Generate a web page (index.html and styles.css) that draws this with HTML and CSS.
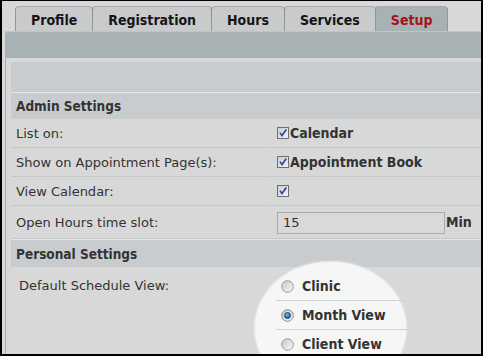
FILE: index.html
```html
<!DOCTYPE html>
<html>
<head>
<meta charset="utf-8">
<link rel="stylesheet" href="styles.css">
</head>
<body>
<svg class="defs" width="0" height="0">
  <defs>
    <linearGradient id="cbg" x1="0" y1="0" x2="1" y2="1">
      <stop offset="0" stop-color="#c9ccd6"/>
      <stop offset="1" stop-color="#f2f3f6"/>
    </linearGradient>
    <linearGradient id="rbg" x1="0" y1="0" x2="1" y2="1">
      <stop offset="0" stop-color="#c4c4c4"/>
      <stop offset="1" stop-color="#fbfbfb"/>
    </linearGradient>
    <radialGradient id="dot" cx="0.4" cy="0.35" r="0.7">
      <stop offset="0" stop-color="#6fc0f0"/>
      <stop offset="1" stop-color="#0d4f8c"/>
    </radialGradient>
  </defs>
</svg>
<div class="frame">
  <div class="tabs">
    <div class="tab">Profile</div>
    <div class="tab">Registration</div>
    <div class="tab">Hours</div>
    <div class="tab">Services</div>
    <div class="tab active">Setup</div>
  </div>
  <div class="panel">
    <div class="panel-bar"></div>
    <div class="panel-body">
      <div class="band"></div>
      <div class="section-head">Admin Settings</div>
      <div class="grid">
        <div class="cell label">List on:</div>
        <div class="cell value">
          <svg class="cb" width="12" height="12" viewBox="0 0 12 12"><rect x="0.5" y="0.5" width="11" height="11" fill="url(#cbg)" stroke="#6e6e6e"/><path d="M3 5.6 L5 8.6 L9.3 2.4" stroke="#34479a" stroke-width="1.7" fill="none"/></svg>
          <span class="strong">Calendar</span>
        </div>
        <div class="cell label">Show on Appointment Page(s):</div>
        <div class="cell value">
          <svg class="cb" width="12" height="12" viewBox="0 0 12 12"><rect x="0.5" y="0.5" width="11" height="11" fill="url(#cbg)" stroke="#6e6e6e"/><path d="M3 5.6 L5 8.6 L9.3 2.4" stroke="#34479a" stroke-width="1.7" fill="none"/></svg>
          <span class="strong">Appointment Book</span>
        </div>
        <div class="cell label">View Calendar:</div>
        <div class="cell value">
          <svg class="cb" width="12" height="12" viewBox="0 0 12 12"><rect x="0.5" y="0.5" width="11" height="11" fill="url(#cbg)" stroke="#6e6e6e"/><path d="M3 5.6 L5 8.6 L9.3 2.4" stroke="#34479a" stroke-width="1.7" fill="none"/></svg>
        </div>
        <div class="cell label tall">Open Hours time slot:</div>
        <div class="cell value tall">
          <input class="field" type="text" value="15">
          <span class="strong unit">Min</span>
        </div>
      </div>
      <div class="personal">
        <div class="section-head ph">Personal Settings</div>
        <div class="spot"></div>
        <div class="pgrid">
          <div class="plabel">Default Schedule View:</div>
          <ul class="radios">
            <li>
              <svg class="rd" width="13" height="13" viewBox="0 0 13 13"><circle cx="6.5" cy="6.5" r="5.8" fill="url(#rbg)" stroke="#9a9a9a"/></svg>
              <span class="strong">Clinic</span>
            </li>
            <li>
              <svg class="rd" width="13" height="13" viewBox="0 0 13 13"><circle cx="6.5" cy="6.5" r="5.8" fill="url(#rbg)" stroke="#8a8a8a"/><circle cx="6.5" cy="6.5" r="3" fill="url(#dot)" stroke="#0b3a66" stroke-width="0.8"/></svg>
              <span class="strong">Month View</span>
            </li>
            <li>
              <svg class="rd" width="13" height="13" viewBox="0 0 13 13"><circle cx="6.5" cy="6.5" r="5.8" fill="url(#rbg)" stroke="#9a9a9a"/></svg>
              <span class="strong">Client View</span>
            </li>
          </ul>
        </div>
      </div>
    </div>
  </div>
</div>
</body>
</html>
```

FILE: styles.css
```css
html, body {
  margin: 0;
  padding: 0;
  background: #d8d8d8;
}

.defs {
  position: absolute;
  width: 0;
  height: 0;
}

.frame {
  width: 483px;
  height: 356px;
  box-sizing: border-box;
  border: 2px solid #000;
  border-top-width: 1px;
  background: #d8d8d8;
  overflow: hidden;
  font-family: "DejaVu Sans", Verdana, sans-serif;
  font-size: 13px;
  color: #333;
}

.strong {
  font-family: "DejaVu Sans Condensed", "DejaVu Sans", sans-serif;
  font-stretch: condensed;
  font-weight: bold;
  font-size: 14px;
  color: #333;
}

/* Tabs */
.tabs {
  display: flex;
  height: 25px;
  padding: 5px 0 0 13px;
}

.tab {
  box-sizing: border-box;
  height: 25px;
  padding: 1px 15px 0 15px;
  margin-left: -1px;
  border: 1px solid #8e989b;
  border-top-color: #a3abae;
  border-bottom: none;
  border-radius: 4px 4px 0 0;
  background: #c8cacb;
  display: flex;
  align-items: center;
  font-family: "DejaVu Sans Condensed", "DejaVu Sans", sans-serif;
  font-stretch: condensed;
  font-weight: bold;
  font-size: 14px;
  color: #151515;
}

.tab:first-child {
  margin-left: 0;
}

.tab.active {
  background: #a8b1b4;
  color: #a3121d;
}

/* Panel */
.panel {
  margin-left: 3px;
  border-left: 1px solid #a8b1b4;
}

.panel-bar {
  height: 26px;
  background: #a8b1b4;
  border-top: 1px solid #bfc6c8;
  border-top-left-radius: 3px;
}

.panel-body {
  padding: 4px 0 0 5px;
}

.band {
  height: 30px;
  background: #c9cccf;
}

.section-head {
  box-sizing: border-box;
  height: 27px;
  border-top: 1px solid #e4e5e5;
  background: #c9cccf;
  padding-left: 5px;
  display: flex;
  align-items: center;
  font-family: "DejaVu Sans Condensed", "DejaVu Sans", sans-serif;
  font-stretch: condensed;
  font-weight: bold;
  font-size: 13.5px;
  color: #333;
}

.grid {
  display: grid;
  grid-template-columns: 260px 1fr;
  column-gap: 1px;
}

.cell {
  height: 28px;
  border-bottom: 1px solid #c4c9ca;
  display: flex;
  align-items: center;
  white-space: nowrap;
}

.cell.tall {
  height: 32px;
}

.label {
  padding-left: 5px;
}

.value {
  padding-left: 5px;
}

.cb {
  display: block;
  margin-right: 1px;
}

.field {
  box-sizing: border-box;
  width: 168px;
  height: 22px;
  margin: 1px 0 0 0;
  padding: 0 0 0 5px;
  border: 1px solid #a9acad;
  background: #d9d9d9;
  font-family: "DejaVu Sans", Verdana, sans-serif;
  font-size: 13px;
  color: #333;
  outline: none;
}

.unit {
  margin-left: 1px;
}

/* Personal settings */
.personal {
  position: relative;
}

.ph {
  height: 28px;
}

.spot {
  position: absolute;
  left: 244px;
  top: 23px;
  width: 151px;
  height: 132px;
  border-radius: 50%;
  background: #f6f6f6;
  box-shadow: 0 0 2px 1px rgba(246, 246, 246, 0.8);
  z-index: 1;
}

.pgrid {
  position: relative;
  z-index: 2;
  display: grid;
  grid-template-columns: 265px 1fr;
}

.plabel {
  padding: 11px 0 0 8px;
  line-height: 16px;
  white-space: nowrap;
}

.radios {
  list-style: none;
  margin: 0;
  padding: 5px 0 0 0;
}

.radios li {
  height: 28px;
  border-bottom: 1px solid #d0d5d7;
  display: flex;
  align-items: center;
  padding-left: 5px;
}

.rd {
  display: block;
  margin-right: 8px;
}
```
